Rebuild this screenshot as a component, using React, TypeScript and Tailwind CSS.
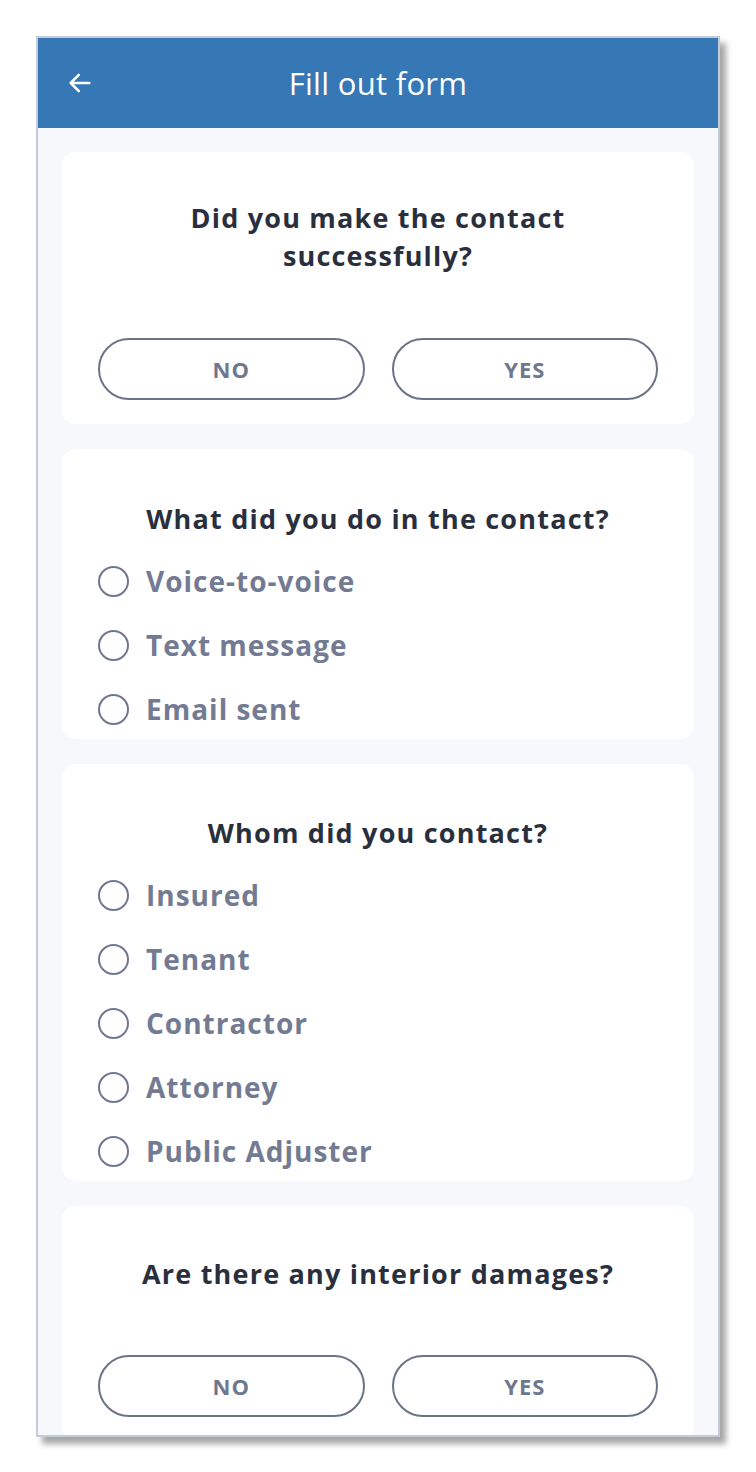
const font = { fontFamily: '"Open Sans", Inter, sans-serif' };

function Title({ children }: { children: React.ReactNode }) {
    return (
        <h2 className="text-center text-[27px] leading-[38px] font-bold tracking-[1.2px] text-[#2a2f3d]">
            {children}
        </h2>
    );
}

function YesNo() {
    return (
        <div className="flex gap-[27px]">
            <button className="flex-1 h-[62px] rounded-full border-[2.5px] border-[#6b7386] text-[22px] font-bold text-[#6f778e] tracking-[1px]">
                NO
            </button>
            <button className="flex-1 h-[62px] rounded-full border-[2.5px] border-[#6b7386] text-[22px] font-bold text-[#6f778e] tracking-[1px]">
                YES
            </button>
        </div>
    );
}

function Radios({ items }: { items: string[] }) {
    return (
        <div className="flex flex-col gap-[16px]">
            {items.map((item) => (
                <label key={item} className="flex items-center h-[48px] gap-[17px]">
                    <span className="w-[31px] h-[31px] rounded-full border-[2.5px] border-[#6f7790] shrink-0" />
                    <span className="text-[28px] font-bold tracking-[1px] text-[#737b93]">{item}</span>
                </label>
            ))}
        </div>
    );
}

export default function App() {
    return (
        <div className="w-[756px] h-[1472px] bg-white pt-[36px] pl-[36px]" style={font}>
            <div className="w-[684px] h-[1401px] border-2 border-[#c3cdd9] shadow-[6px_7px_6px_rgba(0,0,0,0.35)] overflow-hidden flex flex-col bg-[#f7f8fc]">
                <div className="h-[90px] shrink-0 bg-[#3578b5] relative flex items-center justify-center">
                    <svg className="absolute left-[28px]" width="28" height="28" viewBox="0 0 24 24" fill="none" stroke="white" strokeWidth="2.2" strokeLinecap="round" strokeLinejoin="round">
                        <path d="M20 12H4M11 5l-7 7 7 7" />
                    </svg>
                    <h1 className="text-white text-[31px] font-normal tracking-[0.3px]">Fill out form</h1>
                </div>

                <div className="flex flex-col gap-[25px] px-[24px] pt-[24px]">
                    <div className="bg-white rounded-[14px] pt-[47px] pb-[24px] px-[36px]">
                        <Title>
                            Did you make the contact
                            <br />
                            successfully?
                        </Title>
                        <div className="mt-[63px]">
                            <YesNo />
                        </div>
                    </div>

                    <div className="bg-white rounded-[14px] pt-[51px] pb-[6px] px-[36px]">
                        <Title>What did you do in the contact?</Title>
                        <div className="mt-[19px]">
                            <Radios items={['Voice-to-voice', 'Text message', 'Email sent']} />
                        </div>
                    </div>

                    <div className="bg-white rounded-[14px] pt-[50px] pb-[6px] px-[36px]">
                        <Title>Whom did you contact?</Title>
                        <div className="mt-[19px]">
                            <Radios items={['Insured', 'Tenant', 'Contractor', 'Attorney', 'Public Adjuster']} />
                        </div>
                    </div>

                    <div className="bg-white rounded-[14px] pt-[49px] pb-[24px] px-[36px]">
                        <Title>Are there any interior damages?</Title>
                        <div className="mt-[62px]">
                            <YesNo />
                        </div>
                    </div>
                </div>
            </div>
        </div>
    );
}
